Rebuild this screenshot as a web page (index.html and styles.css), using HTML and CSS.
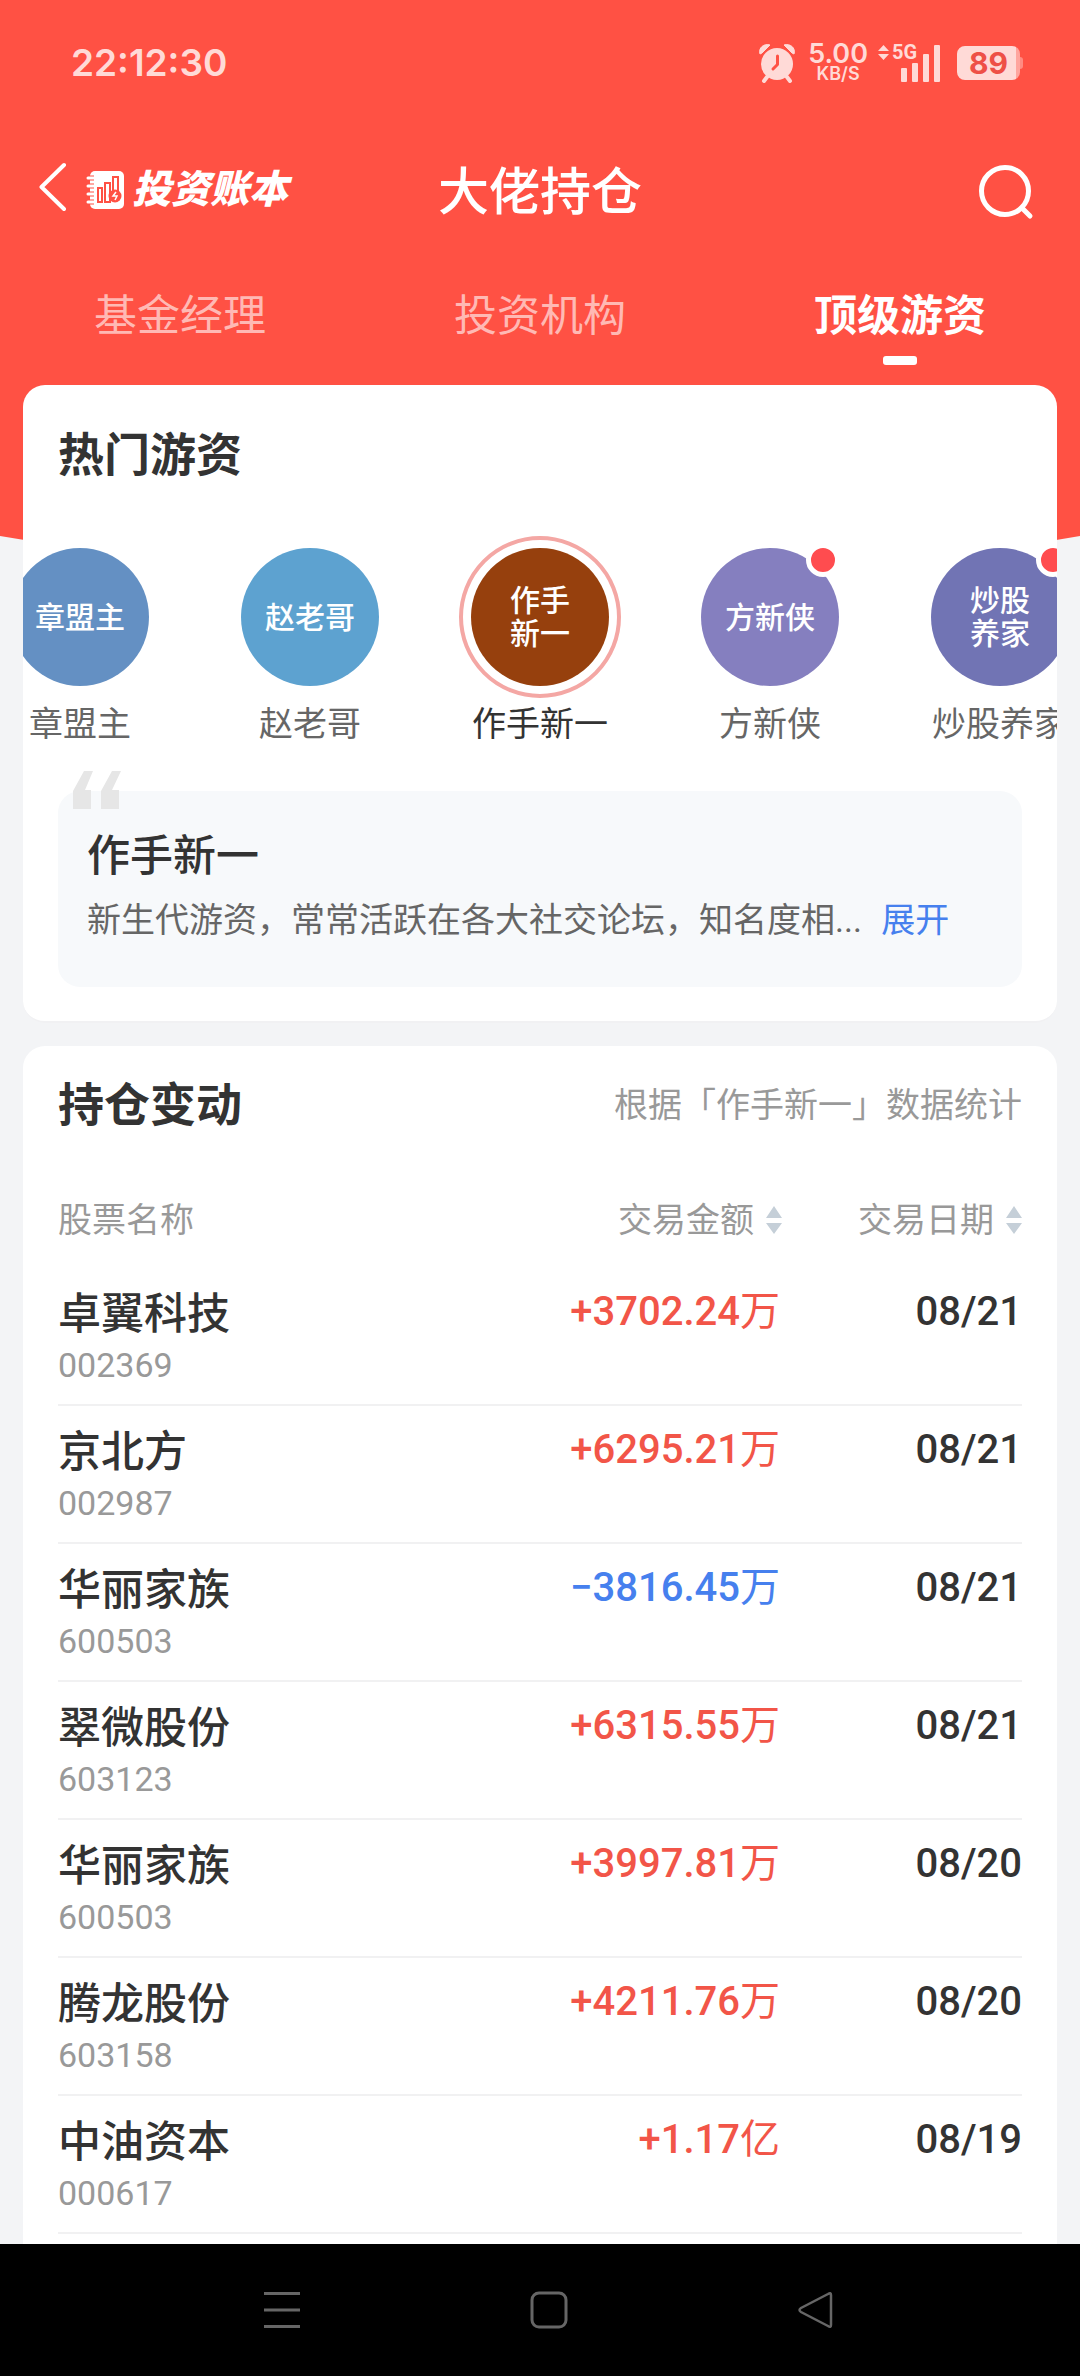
FILE: index.html
```html
<!DOCTYPE html>
<html lang="zh-CN">
<head>
<meta charset="utf-8">
<meta name="viewport" content="width=device-width, initial-scale=1">
<title>大佬持仓</title>
<link rel="stylesheet" href="styles.css">
</head>
<body>
<div class="app">
  <svg class="backdrop" viewBox="0 0 1080 600" preserveAspectRatio="none" aria-hidden="true"><path d="M0 0H1080V536Q540 630 0 536Z" fill="#ff5144"/></svg>

  <div class="status">
    <time class="status-time">22:12:30</time>
    <div class="status-icons">
      <svg class="alarm" width="38" height="40" viewBox="0 0 38 40" aria-hidden="true">
        <path d="M2 11C0 5 6 0 12 2L4 10ZM36 11C38 5 32 0 26 2L34 10Z" fill="currentColor" stroke="currentColor" stroke-linejoin="round"/>
        <circle cx="19" cy="21" r="16" fill="currentColor"/>
        <path d="M9 34L6 38M29 34L32 38" stroke="currentColor" stroke-width="4" stroke-linecap="round"/>
        <path d="M19.500 13V21.500L15 26" stroke="#ff5144" stroke-width="3" fill="none" stroke-linecap="round" stroke-linejoin="round"/>
      </svg>
      <div class="speed"><span class="speed-value">5.00</span><span class="speed-unit">KB/S</span></div>
      <div class="signal">
        <svg width="62" height="38" viewBox="0 0 62 38" aria-hidden="true" fill="currentColor">
          <path d="M0 7L5.500 1L11 7ZM0 10L5.500 16L11 10Z"/>
          <rect x="23" y="24" width="6" height="14" rx="1"/><rect x="34" y="19" width="6" height="19" rx="1"/><rect x="45" y="10" width="6" height="28" rx="1"/><rect x="56" y="1" width="6" height="37" rx="1"/>
        </svg>
        <span class="network">5G</span>
      </div>
      <div class="battery">89</div>
    </div>
  </div>

  <header class="topbar">
    <a class="back" href="#" aria-label="返回">
      <svg width="28" height="50" viewBox="0 0 28 50" aria-hidden="true"><path d="M25 3L2.500 25L25 47" fill="none" stroke="#fff" stroke-width="4" stroke-linecap="round" stroke-linejoin="round"/></svg>
    </a>
    <a class="brand" href="#">
      <svg width="38" height="38" viewBox="0 0 38 38" aria-hidden="true">
        <rect x="4" y="0" width="34" height="38" rx="5" fill="#fff"/>
        <g stroke="#ff5144" stroke-width="5"><path d="M1 7H8M1 15H8M1 23H8M1 31H8"/></g>
        <g stroke="#fff" stroke-width="3" stroke-linecap="round"><path d="M2 7H9M2 15H9M2 23H9M2 31H9"/></g>
        <g fill="#fff" stroke="#ff5144" stroke-width="2"><rect x="12" y="17" width="4" height="14"/><rect x="19" y="12" width="5" height="19"/><rect x="27" y="6" width="5" height="16"/></g>
        <circle cx="29" cy="25" r="6.500" fill="#ff5144"/><path d="M30 21L27 25H31L29 29" fill="none" stroke="#fff" stroke-width="1.500"/>
      </svg>
      <span class="brand-name">投资账本</span>
    </a>
    <h1 class="title">大佬持仓</h1>
    <button class="search" type="button" aria-label="搜索">
      <svg width="56" height="58" viewBox="0 0 56 58" aria-hidden="true"><g fill="none" stroke="#fff" stroke-width="5" stroke-linecap="round"><circle cx="27" cy="28" r="23.500"/><path d="M44 45L52 53"/></g></svg>
    </button>
  </header>

  <nav class="tabs">
    <button class="tab" type="button">基金经理</button>
    <button class="tab" type="button">投资机构</button>
    <button class="tab tab-active" type="button">顶级游资</button>
  </nav>

  <main class="content">
    <section class="card hot">
      <h2 class="heading">热门游资</h2>
      <div class="people">
        <button class="person" type="button"><span class="ring"><span class="avatar avatar-steel">章盟主</span></span><span class="person-name">章盟主</span></button>
        <button class="person" type="button"><span class="ring"><span class="avatar avatar-sky">赵老哥</span></span><span class="person-name">赵老哥</span></button>
        <button class="person person-active" type="button"><span class="ring"><span class="avatar avatar-brown">作手<br>新一</span></span><span class="person-name">作手新一</span></button>
        <button class="person" type="button"><span class="ring"><span class="avatar avatar-violet">方新侠</span><span class="dot"></span></span><span class="person-name">方新侠</span></button>
        <button class="person" type="button"><span class="ring"><span class="avatar avatar-indigo">炒股<br>养家</span><span class="dot"></span></span><span class="person-name">炒股养家</span></button>
      </div>
      <div class="intro">
        <svg class="quote" width="48" height="38" viewBox="0 0 48 38" aria-hidden="true"><path d="M11 0H20L12 19H18V38H0V20ZM39 0H48L39 19H46V38H28V20Z" fill="#e6e6e6"/></svg>
        <h3 class="intro-name">作手新一</h3>
        <p class="intro-text">新生代游资，常常活跃在各大社交论坛，知名度相... <a class="more" href="#">展开</a></p>
      </div>
    </section>

    <section class="card changes">
      <div class="changes-head">
        <h2 class="heading">持仓变动</h2>
        <span class="note">根据「作手新一」数据统计</span>
      </div>
      <table class="trades">
        <colgroup><col><col class="col-amount"><col class="col-date"></colgroup>
        <thead>
          <tr>
            <th>股票名称</th>
            <th><button class="sort" type="button">交易金额<svg width="16" height="28" viewBox="0 0 16 28" aria-hidden="true"><path d="M0 12L8 0L16 12ZM0 17L8 28L16 17Z" fill="#c5cfd8"/></svg></button></th>
            <th><button class="sort" type="button">交易日期<svg width="16" height="28" viewBox="0 0 16 28" aria-hidden="true"><path d="M0 12L8 0L16 12ZM0 17L8 28L16 17Z" fill="#c5cfd8"/></svg></button></th>
          </tr>
        </thead>
        <tbody>
          <tr><td><div class="stock">卓翼科技</div><div class="code">002369</div></td><td class="up"><b>+3702.24</b>万</td><td class="date">08/21</td></tr>
          <tr><td><div class="stock">京北方</div><div class="code">002987</div></td><td class="up"><b>+6295.21</b>万</td><td class="date">08/21</td></tr>
          <tr><td><div class="stock">华丽家族</div><div class="code">600503</div></td><td class="down"><b>−3816.45</b>万</td><td class="date">08/21</td></tr>
          <tr><td><div class="stock">翠微股份</div><div class="code">603123</div></td><td class="up"><b>+6315.55</b>万</td><td class="date">08/21</td></tr>
          <tr><td><div class="stock">华丽家族</div><div class="code">600503</div></td><td class="up"><b>+3997.81</b>万</td><td class="date">08/20</td></tr>
          <tr><td><div class="stock">腾龙股份</div><div class="code">603158</div></td><td class="up"><b>+4211.76</b>万</td><td class="date">08/20</td></tr>
          <tr><td><div class="stock">中油资本</div><div class="code">000617</div></td><td class="up"><b>+1.17</b>亿</td><td class="date">08/19</td></tr>
        </tbody>
      </table>
    </section>
  </main>

  <nav class="system">
    <button type="button" aria-label="最近任务"><svg width="38" height="38" viewBox="0 0 38 38" aria-hidden="true"><path d="M1 2.500H37M1 19H37M1 35.500H37" stroke="#666" stroke-width="3"/></svg></button>
    <button type="button" aria-label="主页"><svg width="38" height="38" viewBox="0 0 38 38" aria-hidden="true"><rect x="2" y="2" width="34" height="34" rx="7" fill="none" stroke="#666" stroke-width="3"/></svg></button>
    <button type="button" aria-label="返回上一页"><svg width="38" height="38" viewBox="0 0 38 38" aria-hidden="true"><path d="M34 4V34Q34 37 31 35L4 21Q1 19 4 17L31 3Q34 1 34 4Z" fill="none" stroke="#666" stroke-width="2.500"/></svg></button>
  </nav>
</div>
</body>
</html>
```
FILE: styles.css
```css
* { box-sizing: border-box; }

body {
  margin: 0;
  background: #f3f4f6;
  color: #333;
  font-family: Roboto, "Noto Sans CJK SC", sans-serif;
  font-size: 34px;
  line-height: 52px;
}

h1, h2, h3, p { margin: 0; font-weight: inherit; }
a { color: inherit; text-decoration: none; }
svg { display: block; flex: none; }

button {
  margin: 0;
  padding: 0;
  border: 0;
  background: none;
  color: inherit;
  font: inherit;
}

.app {
  position: relative;
  isolation: isolate;
  display: flex;
  flex-direction: column;
  min-height: 100vh;
  overflow: hidden;
}

/* red area that runs on behind the first card */
.backdrop {
  position: absolute;
  z-index: -1;
  top: 0;
  left: 0;
  width: 100%;
  height: 600px;
}

.status {
  display: flex;
  align-items: center;
  justify-content: space-between;
  height: 126px;
  padding: 0 60px 0 71px;
  color: #ffdad7;
  font-family: Inter, sans-serif;
  font-weight: 600;
}
.status-time { font-size: 37px; }
.status-icons { display: flex; align-items: center; }
.speed {
  display: flex;
  flex-direction: column;
  align-items: center;
  margin: 0 10px 0 12px;
}
.speed-value { font-size: 27px; line-height: 22px; }
.speed-unit { font-size: 18px; line-height: 18px; }
.signal { position: relative; }
.network {
  position: absolute;
  top: 0;
  left: 14px;
  font-family: Roboto, sans-serif;
  font-size: 20px;
  font-weight: 700;
  line-height: 17px;
}
.battery {
  position: relative;
  width: 63px;
  height: 34px;
  margin-left: 17px;
  border-radius: 8px;
  background: linear-gradient(90deg, #ffdad7 59px, #ffa59e 59px);
  color: #ee5047;
  font-size: 30px;
  font-weight: 700;
  line-height: 34px;
  text-align: center;
}
.battery::after {
  content: "";
  position: absolute;
  top: 11px;
  left: 100%;
  width: 3px;
  height: 12px;
  border-radius: 0 3px 3px 0;
  background: #ff8b82;
}

.topbar {
  position: relative;
  display: flex;
  align-items: center;
  height: 128px;
  padding: 0 46px 0 39px;
  color: #fff;
}
.back { padding-bottom: 6px; }
.brand {
  display: flex;
  align-items: center;
  gap: 8px;
  margin-left: 19px;
}
.brand-name { font-size: 39px; font-weight: 900; font-style: italic; }
.title {
  position: absolute;
  inset: 5px 0 0;
  width: max-content;
  height: max-content;
  margin: auto;
  font-size: 51px;
  font-weight: 500;
}
.search { margin-left: auto; padding-top: 4px; }

.tabs { display: grid; grid-template-columns: repeat(3, 1fr); }
.tab {
  display: flex;
  flex-direction: column;
  align-items: center;
  gap: 9px;
  padding: 31px 0 20px;
  color: #ffb9b4;
  font-size: 43px;
  line-height: 62px;
}
.tab::after {
  content: "";
  width: 34px;
  height: 9px;
  border-radius: 3px;
}
.tab-active { color: #fff; font-weight: 700; }
.tab-active::after { background: #fff; }

.content {
  display: flex;
  flex: 1;
  flex-direction: column;
  gap: 23px;
  padding: 0 23px;
}
.card { border-radius: 22px; background: #fff; }
.heading { font-size: 46px; font-weight: 700; line-height: 70px; }

.hot {
  padding: 35px 0 34px;
  border-bottom: 2px solid #f1f1f3;
  overflow: hidden;
}
.hot .heading { padding: 0 35px; }
.people {
  display: flex;
  justify-content: center;
  margin-top: 46px;
}
.person {
  display: flex;
  flex: none;
  flex-direction: column;
  align-items: center;
  width: 230px;
  color: #666;
}
.person-active { color: #333; }
.person-name { white-space: nowrap; }
.ring {
  position: relative;
  padding: 8px;
  border: 4px solid transparent;
  border-radius: 50%;
}
.person-active .ring { border-color: #f4a7a4; }
.avatar {
  display: flex;
  align-items: center;
  justify-content: center;
  width: 138px;
  height: 138px;
  border-radius: 50%;
  color: #fff;
  font-size: 30px;
  font-weight: 500;
  line-height: 33px;
}
.avatar-steel { background: #6490c3; }
.avatar-sky { background: #5da2d0; }
.avatar-brown { background: #96400d; }
.avatar-violet { background: #857fbf; }
.avatar-indigo { background: #7174b4; }
.dot {
  position: absolute;
  top: 3px;
  right: 7px;
  width: 34px;
  height: 34px;
  border: 5px solid #fff;
  border-radius: 50%;
  background: #ff4c4f;
}

.intro {
  position: relative;
  margin: 41px 35px 0;
  padding: 39px 29px 41px;
  border-radius: 22px;
  background: #f7f9fb;
}
.quote { position: absolute; top: -20px; left: 15px; }
.intro-name { font-size: 43px; font-weight: 500; }
.intro-text { margin-top: 12px; color: #666; }
.more { margin-left: 11px; color: #4680ee; }

.changes {
  flex: 1;
  padding: 24px 35px 0;
  border-radius: 22px 22px 0 0;
}
.changes-head {
  display: flex;
  align-items: center;
  justify-content: space-between;
}
.note { color: #999; }

.trades {
  width: 100%;
  margin-top: 32px;
  border-spacing: 0;
  table-layout: fixed;
}
.col-amount { width: 300px; }
.col-date { width: 240px; }
.trades th {
  height: 96px;
  padding: 0;
  color: #999;
  font-weight: 400;
  text-align: right;
}
.trades th:first-child { text-align: left; }
.sort { display: inline-flex; align-items: center; gap: 12px; }
.trades td {
  height: 138px;
  padding: 18px 0 14px;
  border-bottom: 2px solid #f1f1f2;
  font-size: 40px;
  text-align: right;
  vertical-align: top;
}
.trades td:first-child { padding: 21px 0 13px; text-align: left; }
.stock { font-size: 43px; font-weight: 500; line-height: 50px; }
.code { color: #999; font-size: 34px; }
.trades .up, .trades .down { padding-right: 2px; }
.up { color: #f25548; }
.down { color: #4680ee; }
.trades b, .date { font-weight: 500; }

.system {
  display: grid;
  grid-template-columns: repeat(3, 1fr);
  height: 132px;
  padding: 0 130px 0 148px;
  background: #000;
}
.system button { display: flex; align-items: center; justify-content: center; }
```
